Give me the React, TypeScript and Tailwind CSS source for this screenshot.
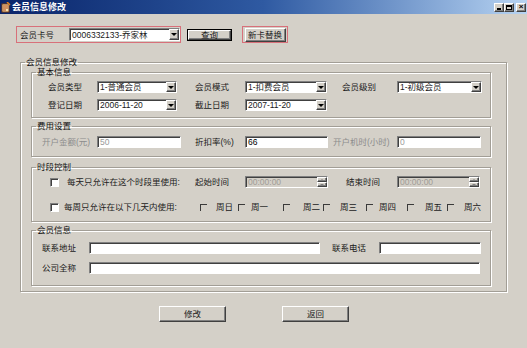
import type { ReactNode } from "react"

const SUNKEN = "border border-t-[#808080] border-l-[#808080] border-r-white border-b-white shadow-[inset_1px_1px_0_#404040]"
const RAISED = "border border-t-white border-l-white border-r-[#404040] border-b-[#404040] shadow-[inset_-1px_-1px_0_#808080]"

function Group({ title, className = "", children }: { title: string; className?: string; children: ReactNode }) {
  return (
    <fieldset className={`border border-[#a29e96] shadow-[1px_1px_0_#fff,inset_1px_1px_0_#fff] ${className}`}>
      <legend className="ml-[4px] px-[1px] text-[8.5px] leading-[10px] text-[#111]">{title}</legend>
      {children}
    </fieldset>
  )
}

function DropButton() {
  return (
    <span className={`${RAISED} bg-[#d4d0c8] w-[10px] h-full flex items-center justify-center shrink-0`}>
      <span className="border-x-[3px] border-x-transparent border-t-[3px] border-t-black" />
    </span>
  )
}

function Combo({ w, value, h = "h-[12px]" }: { w: string; value: string; h?: string }) {
  return (
    <div className={`${SUNKEN} bg-white ${h} ${w} flex items-center`}>
      <span className="flex-1 pl-[2px] leading-[10px] whitespace-nowrap overflow-hidden">{value}</span>
      <DropButton />
    </div>
  )
}

function TextBox({ w, value = "", disabled = false }: { w: string; value?: string; disabled?: boolean }) {
  return (
    <div className={`${SUNKEN} bg-white h-[12px] ${w} flex items-center pl-[2px] leading-[10px] ${disabled ? "text-[#9a9a9a]" : "text-black"}`}>
      {value}
    </div>
  )
}

function TimeBox({ w }: { w: string }) {
  return (
    <div className={`${SUNKEN} bg-[#d4d0c8] h-[12px] ${w} flex items-center`}>
      <span className="flex-1 pl-[2px] leading-[10px] text-[#a09c96]">00:00:00</span>
      <span className="w-[10px] h-full flex flex-col shrink-0">
        <span className={`${RAISED} bg-[#d4d0c8] flex-1 flex items-center justify-center`}>
          <span className="border-x-[2px] border-x-transparent border-b-[2px] border-b-[#808080]" />
        </span>
        <span className={`${RAISED} bg-[#d4d0c8] flex-1 flex items-center justify-center`}>
          <span className="border-x-[2px] border-x-transparent border-t-[2px] border-t-[#808080]" />
        </span>
      </span>
    </div>
  )
}

function Check() {
  return <span className={`${SUNKEN} bg-white w-[9px] h-[9px] shrink-0`} />
}

function FlatCheck({ className = "" }: { className?: string }) {
  return <span className={`w-[7px] h-[7px] border-l border-t border-[#3a3a3a] shrink-0 ${className}`} />
}

const DAYS = [
  { name: "周日", cm: "ml-0", lm: "ml-[9px]" },
  { name: "周一", cm: "ml-[4px]", lm: "ml-[6px]" },
  { name: "周二", cm: "ml-[14px]", lm: "ml-[13px]" },
  { name: "周三", cm: "ml-[2px]", lm: "ml-[10px]" },
  { name: "周四", cm: "ml-[8px]", lm: "ml-[6px]" },
  { name: "周五", cm: "ml-[10px]", lm: "ml-[11px]" },
  { name: "周六", cm: "ml-[4px]", lm: "ml-[10px]" },
]

export default function App() {
  return (
    <div className="w-[527px] h-[348px] bg-[#d4d0c8] overflow-hidden text-[8.5px] leading-[10px] text-[#1a1a1a] font-['Liberation_Sans','Noto_Sans_CJK_SC',sans-serif]">
      {/* Title bar */}
      <div className="h-[14px] bg-linear-to-r from-[#0a246a] via-[#2f5aa2] to-[#b8d4f2] flex items-center">
        <svg width="10" height="11" viewBox="0 0 10 11" className="ml-[1px] shrink-0">
          <rect x="1" y="2" width="7" height="8" fill="#f4e0b0" stroke="#7a3a10" strokeWidth="1" />
          <path d="M2 4h5M2 6h5M2 8h3" stroke="#b04010" strokeWidth="1" />
          <path d="M6 0l3 3" stroke="#e08020" strokeWidth="1.5" />
        </svg>
        <span className="ml-[1px] text-white font-bold text-[9px]">会员信息修改</span>
        <div className="ml-auto flex items-center mr-[1px]">
          <span className={`${RAISED} bg-[#d4d0c8] w-[10px] h-[9px] flex items-end justify-center pb-[1px]`}>
            <span className="w-[4px] h-[1.5px] bg-black" />
          </span>
          <span className={`${RAISED} bg-[#d4d0c8] w-[10px] h-[9px] flex items-center justify-center`}>
            <span className="w-[6px] h-[5px] border border-black border-t-2" />
          </span>
          <span className={`${RAISED} bg-[#d4d0c8] w-[10px] h-[9px] ml-[2px] flex items-center justify-center text-[8px] leading-[8px] font-bold text-black`}>
            ×
          </span>
        </div>
      </div>

      {/* Card lookup row */}
      <div className="mt-[12px] flex items-center">
        <div className="ml-[16px] w-[165px] h-[17px] border border-[#d8707a] flex items-center pl-[3px]">
          <span className="w-[49px]">会员卡号</span>
          <Combo w="w-[111px]" h="h-[13px]" value="0006332133-乔家林" />
        </div>
        <div className="ml-[6px] w-[45px] h-[12px] border border-black">
          <div className={`${RAISED} bg-[#d4d0c8] w-full h-full flex items-center justify-center`}>查询</div>
        </div>
        <div className="ml-[10px] w-[46px] h-[17px] border border-[#d8707a] flex items-center justify-center">
          <div className={`${RAISED} bg-[#d4d0c8] w-[41px] h-[14px] flex items-center justify-center whitespace-nowrap`}>新卡替换</div>
        </div>
      </div>

      {/* Main group */}
      <Group title="会员信息修改" className="ml-[20px] mt-[14px] w-[487px]">
        <div className="pl-[10px] pb-[5px] flex flex-col">
          <Group title="基本信息" className="w-[460px]">
            <div className="pl-[16px] pt-[4px] pb-[6px] flex flex-col gap-[6px]">
              <div className="flex items-center h-[12px]">
                <span className="w-[49px]">会员类型</span>
                <Combo w="w-[80px]" value="1-普通会员" />
                <span className="ml-[18px] w-[50px]">会员模式</span>
                <Combo w="w-[82px]" value="1-扣费会员" />
                <span className="ml-[15px] w-[55px]">会员级别</span>
                <Combo w="w-[85px]" value="1-初级会员" />
              </div>
              <div className="flex items-center h-[12px]">
                <span className="w-[49px]">登记日期</span>
                <Combo w="w-[80px]" value="2006-11-20" />
                <span className="ml-[18px] w-[50px]">截止日期</span>
                <Combo w="w-[82px]" value="2007-11-20" />
              </div>
            </div>
          </Group>

          <Group title="费用设置" className="w-[460px] mt-[3px]">
            <div className="pl-[10px] pt-[5px] pb-[8px] flex items-center h-[25px]">
              <span className="w-[55px] text-[#8c8c8c]">开户金额(元)</span>
              <TextBox w="w-[84px]" value="50" disabled />
              <span className="ml-[14px] w-[50px]">折扣率(%)</span>
              <TextBox w="w-[83px]" value="66" />
              <span className="ml-[5px] w-[64px] text-[#8c8c8c]">开户机时(小时)</span>
              <TextBox w="w-[84px]" value="0" disabled />
            </div>
          </Group>

          <Group title="时段控制" className="w-[460px] mt-[5px]">
            <div className="pl-[18px] pt-[4px] pb-[8px] flex flex-col gap-[13px]">
              <div className="flex items-center h-[12px]">
                <Check />
                <span className="ml-[8px] w-[128px]">每天只允许在这个时段里使用:</span>
                <span className="w-[50px]">起始时间</span>
                <TimeBox w="w-[83px]" />
                <span className="ml-[18px] w-[51px]">结束时间</span>
                <TimeBox w="w-[83px]" />
              </div>
              <div className="flex items-center h-[12px]">
                <Check />
                <span className="ml-[5px] w-[136px]">每周只允许在以下几天内使用:</span>
                {DAYS.map(d => (
                  <span key={d.name} className="flex items-center">
                    <FlatCheck className={d.cm} />
                    <span className={`${d.lm} w-[18px] whitespace-nowrap`}>{d.name}</span>
                  </span>
                ))}
              </div>
            </div>
          </Group>

          <Group title="会员信息" className="w-[460px] mt-[3px]">
            <div className="pl-[10px] pt-[7px] pb-[11px] flex flex-col gap-[8px]">
              <div className="flex items-center h-[12px]">
                <span className="w-[47px]">联系地址</span>
                <TextBox w="w-[231px]" />
                <span className="ml-[12px] w-[47px]">联系电话</span>
                <TextBox w="w-[102px]" />
              </div>
              <div className="flex items-center h-[12px]">
                <span className="w-[47px]">公司全称</span>
                <TextBox w="w-[391px]" />
              </div>
            </div>
          </Group>
        </div>
      </Group>

      {/* Bottom buttons */}
      <div className="mt-[14px] flex">
        <button className={`${RAISED} ml-[159px] w-[67px] h-[16px] bg-[#d4d0c8] flex items-center justify-center`}>修改</button>
        <button className={`${RAISED} ml-[56px] w-[67px] h-[16px] bg-[#d4d0c8] flex items-center justify-center`}>返回</button>
      </div>
    </div>
  )
}
